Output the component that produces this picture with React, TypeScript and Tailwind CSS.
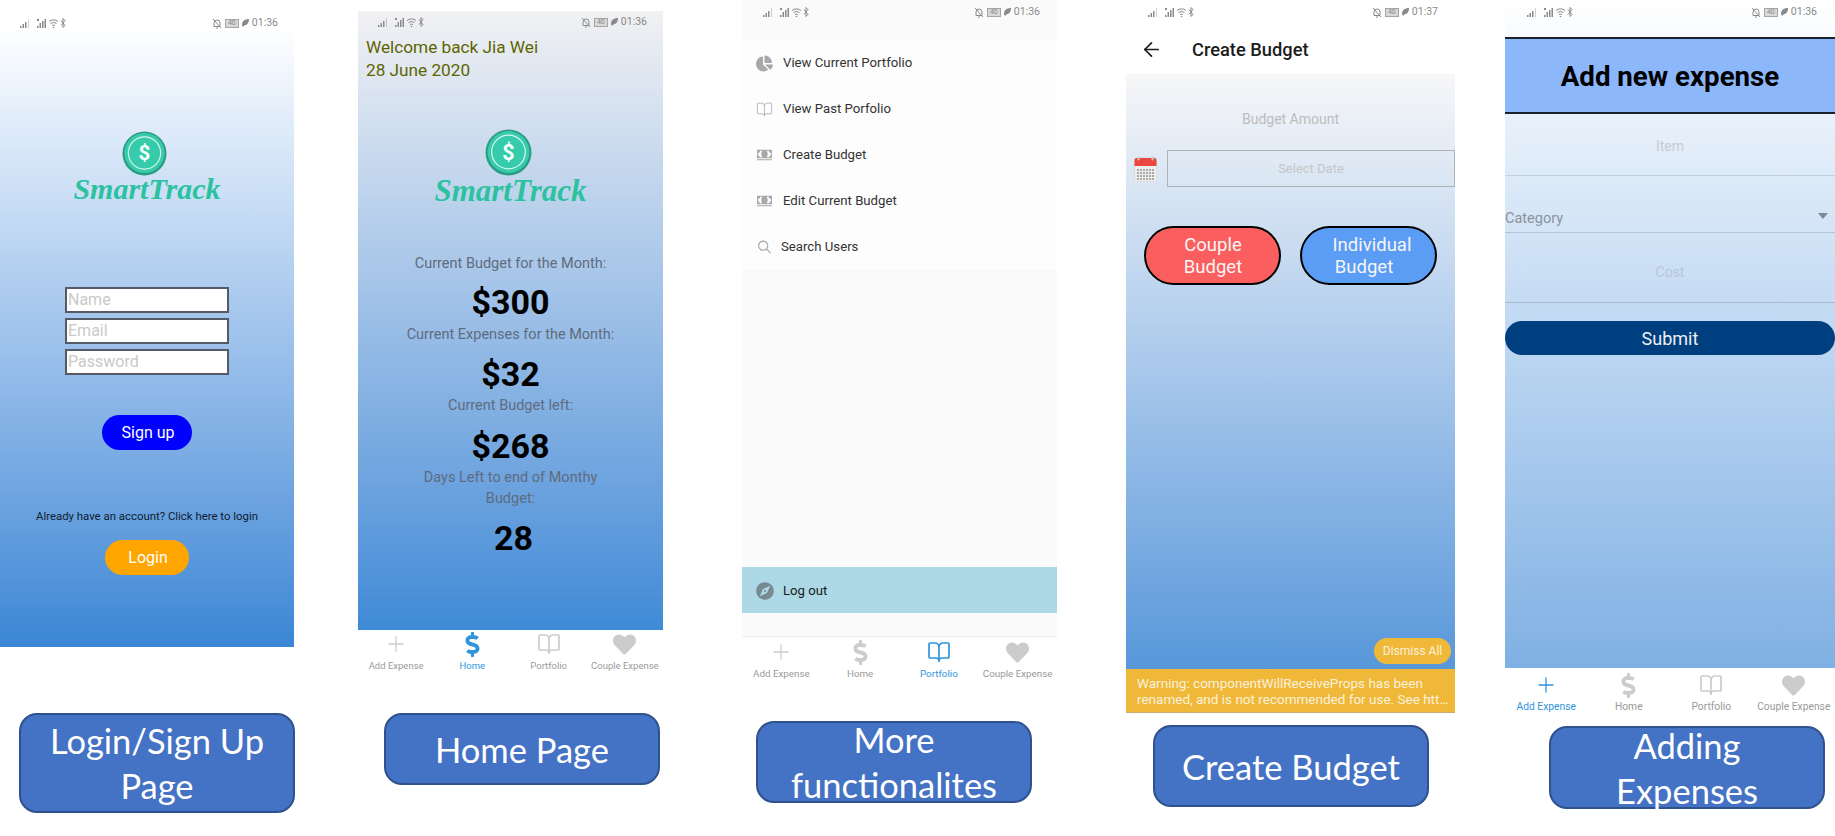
import { FaChartPie, FaDollarSign, FaHeart } from "react-icons/fa";
import { IoIosSearch, IoMdCash, IoMdCompass } from "react-icons/io";
import { LuArrowLeft, LuBookOpen, LuPlus } from "react-icons/lu";

const StatusIcons = ({ time, className }: { time: string; className: string }) => (
  <div className={`flex items-center justify-between h-[12px] text-[#8a8a8a] ${className}`}>
    <div className="flex items-center">
      <svg width="46" height="12" viewBox="0 0 46 12" fill="currentColor">
        <rect x="0" y="9" width="1.5" height="2" />
        <rect x="2.5" y="7" width="1.5" height="4" />
        <rect x="5" y="5" width="1.5" height="6" />
        <rect x="8" y="2" width="1" height="9" opacity="0.4" />
        <rect x="17" y="9" width="1.5" height="2" />
        <rect x="19.5" y="6" width="1.5" height="5" />
        <rect x="22" y="4" width="1.5" height="7" />
        <rect x="24.5" y="2" width="1.5" height="9" />
        <rect x="17" y="2" width="2" height="2" />
        <path d="M29 4.5a7 7 0 0 1 9 0M30.5 6.5a5 5 0 0 1 6 0M32 8.5a3 3 0 0 1 3 0" stroke="currentColor" fill="none" strokeWidth="1" />
        <circle cx="33.5" cy="10.5" r="0.8" />
        <path d="M41 3.5l4 5-2 2v-9l2 2-4 5" stroke="currentColor" fill="none" strokeWidth="1" />
      </svg>
    </div>
    <div className="flex items-center gap-[3px]">
      <svg width="10" height="11" viewBox="0 0 10 11" fill="none" stroke="currentColor" strokeWidth="1">
        <path d="M2 8.5V5a3 3 0 0 1 6 0v3.5zM4 10h2M1 1l8 9" />
      </svg>
      <div className="flex items-center justify-center w-[14px] h-[9px] border border-[#a5a5a5] bg-[#d8d8d8] text-[7px] leading-none font-['Roboto',sans-serif]">40</div>
      <svg width="7" height="8" viewBox="0 0 7 8" fill="currentColor">
        <path d="M7 0C3 0 0 2 0 6l1 2 2-2C5 6 7 4 7 0z" />
      </svg>
      <span className="text-[10.5px] leading-none">{time}</span>
    </div>
  </div>
);

const Logo = ({ text, coin }: { text: string; coin: number }) => (
  <div className="flex flex-col items-center">
    <svg width={coin} height={coin} viewBox="0 0 46 46" className="mr-[4px]">
      <circle cx="23" cy="23" r="22.5" fill="#2c9b83" />
      <circle cx="23" cy="22.5" r="20.5" fill="#36cbaa" />
      <circle cx="23" cy="22.5" r="16.5" fill="none" stroke="#d8f5ee" strokeWidth="1.2" />
      <text x="23" y="30" textAnchor="middle" fontSize="21" fontWeight="700" fill="#f2fffb" fontFamily="Roboto, sans-serif">$</text>
    </svg>
    <span className={`font-['Liberation_Serif',serif] font-bold italic leading-[30px] text-[#2cc2a0] ${text}`}>SmartTrack</span>
  </div>
);

const tabs = [
  { label: "Add Expense", icon: <LuPlus size={24} strokeWidth={1.3} /> },
  { label: "Home", icon: <FaDollarSign size={25} /> },
  { label: "Portfolio", icon: <LuBookOpen size={24} strokeWidth={1.7} /> },
  { label: "Couple Expense", icon: <FaHeart size={23} /> },
];

const TabBar = ({ active, textSize, className }: { active: string; textSize: string; className: string }) => (
  <div className={`grid grid-cols-4 bg-white ${className}`}>
    {tabs.map((t) => (
      <div key={t.label} className="flex flex-col items-center">
        <div className={`flex items-center justify-center h-[26px] ${t.label === active ? "text-[#2f95dc]" : "text-[#cccccc]"}`}>{t.icon}</div>
        <span className={`mt-[2px] leading-[14px] whitespace-nowrap ${textSize} ${t.label === active ? "text-[#2f95dc]" : "text-[#9a9a9a]"}`}>{t.label}</span>
      </div>
    ))}
  </div>
);

const Caption = ({ className, children }: { className: string; children: React.ReactNode }) => (
  <div className={`flex items-center justify-center w-[276px] shrink-0 rounded-[18px] border-2 border-[#2f528f] bg-[#4472c4] text-center font-['Lato',sans-serif] text-[34.5px] leading-[45px] text-white ${className}`}>
    <span>{children}</span>
  </div>
);

const LoginField = ({ placeholder }: { placeholder: string }) => (
  <div className="flex items-center w-[164px] h-[26px] border-2 border-[#555b66] bg-white pl-[1px] text-[16px] text-[#c9c9c9]">{placeholder}</div>
);

const StatLabel = ({ children }: { children: React.ReactNode }) => (
  <p className="w-[240px] text-center text-[14.5px] leading-[21px] text-[#5f6b7e]">{children}</p>
);

const StatValue = ({ children, className }: { children: string; className: string }) => (
  <p className={`text-center text-[34px] font-bold leading-[40px] text-black ${className}`}>{children}</p>
);

const menuItems = [
  { label: "View Current Portfolio", icon: <FaChartPie size={17} />, gap: "gap-[10px]" },
  { label: "View Past Porfolio", icon: <LuBookOpen size={17} strokeWidth={1.1} />, gap: "gap-[10px]" },
  { label: "Create Budget", icon: <IoMdCash size={18} />, gap: "gap-[10px]" },
  { label: "Edit Current Budget", icon: <IoMdCash size={18} />, gap: "gap-[10px]" },
  { label: "Search Users", icon: <IoIosSearch size={18} />, gap: "gap-[8px]" },
];

const BudgetButton = ({ bg, children }: { bg: string; children: React.ReactNode }) => (
  <div className={`flex items-center justify-center w-[137px] h-[59px] rounded-full border-2 border-black text-center text-[18.5px] leading-[22px] text-[#f5f5f5] ${bg}`}>{children}</div>
);

export default function App() {
  return (
    <div className="flex w-[1835px] h-[836px] overflow-hidden bg-white font-['Roboto',sans-serif]">
      {/* Login / sign up */}
      <div className="flex flex-col w-[294px] shrink-0">
        <section className="flex flex-col items-center h-[647px] bg-gradient-to-b from-white from-[4%] to-[#3a86d4]">
          <StatusIcons time="01:36" className="w-full mt-[17px] pl-[20px] pr-[16px]" />
          <div className="mt-[102px]">
            <Logo text="-mt-[2px] text-[30px]" coin={45} />
          </div>
          <div className="flex flex-col gap-[5px] mt-[83px]">
            <LoginField placeholder="Name" />
            <LoginField placeholder="Email" />
            <LoginField placeholder="Password" />
          </div>
          <div className="flex items-center justify-center w-[90px] h-[35px] mt-[40px] rounded-full bg-[#0000ff] pl-[2px] text-[16px] text-white">Sign up</div>
          <p className="mt-[58px] text-[11.4px] leading-[16px] text-[#10202f]">Already have an account? Click here to login</p>
          <div className="flex items-center justify-center w-[84px] h-[35px] mt-[16px] rounded-full bg-[#ffa500] pl-[2px] text-[16px] text-white">Login</div>
        </section>
        <Caption className="h-[100px] ml-[19px] mt-[66px]">Login/Sign Up Page</Caption>
      </div>

      {/* Home */}
      <div className="flex flex-col w-[305px] shrink-0 ml-[64px] pt-[11px]">
        <section className="flex flex-col h-[619px] bg-gradient-to-b from-[#f1f1f3] to-[#3f8ad6]">
          <StatusIcons time="01:36" className="mt-[5px] pl-[20px] pr-[16px]" />
          <div className="mt-[8px] pl-[8px] text-[17.2px] leading-[23.4px] text-[#5e6400]">
            <p>Welcome back Jia Wei</p>
            <p>28 June 2020</p>
          </div>
          <div className="flex flex-col items-center mt-[46px]">
            <Logo text="text-[31px]" coin={47} />
          </div>
          <div className="flex flex-col items-center mt-[47px]">
            <StatLabel>Current Budget for the Month:</StatLabel>
            <StatValue className="mt-[8px] mb-[2px]">$300</StatValue>
            <StatLabel>Current Expenses for the Month:</StatLabel>
            <StatValue className="mt-[9px] mb-[1px]">$32</StatValue>
            <StatLabel>Current Budget left:</StatLabel>
            <StatValue className="mt-[10px] mb-[1px]">$268</StatValue>
            <StatLabel>Days Left to end of Monthy<br />Budget:</StatLabel>
            <StatValue className="mt-[9px] pl-[6px]">28</StatValue>
          </div>
        </section>
        <TabBar active="Home" textSize="text-[9.5px]" className="h-[63px] pt-[1px]" />
        <Caption className="h-[72px] ml-[26px] mt-[20px]">Home Page</Caption>
      </div>

      {/* More functionalities */}
      <div className="flex flex-col w-[315px] shrink-0 ml-[79px]">
        <section className="flex flex-col h-[636px] bg-[#fafafa]">
          <StatusIcons time="01:36" className="mt-[6px] pl-[21px] pr-[17px]" />
          <div className="flex flex-col h-[231px] mt-[22px] bg-[#fdfdfd] border-b border-[#f8f8f8]">
            {menuItems.map((item) => (
              <div key={item.label} className={`flex items-center h-[46px] pl-[14px] text-[13.2px] text-[#333333] ${item.gap}`}>
                <span className="flex justify-center w-[17px] text-[#a8a8a8]">{item.icon}</span>
                <span>{item.label}</span>
              </div>
            ))}
          </div>
          <div className="flex items-center gap-[8px] h-[46px] mt-[296px] pl-[13px] pt-[1px] bg-[#add8e6] text-[13.2px] text-[#1a1a1a]">
            <IoMdCompass size={20} className="text-[#778a92]" />
            <span>Log out</span>
          </div>
        </section>
        <TabBar active="Portfolio" textSize="text-[9.8px]" className="h-[85px] pt-[2px] border-t border-[#eeeeee]" />
        <Caption className="h-[82px] ml-[14px]">More functionalites</Caption>
      </div>

      {/* Create budget */}
      <div className="flex flex-col w-[329px] shrink-0 ml-[69px]">
        <section className="flex flex-col h-[713px]">
          <div className="shrink-0 h-[74px] bg-white">
            <StatusIcons time="01:37" className="mt-[6px] pl-[22px] pr-[17px]" />
            <div className="flex items-center gap-[29px] mt-[18px] pl-[14px] text-[18.3px] font-medium text-[#1c1c1c]">
              <LuArrowLeft size={23} strokeWidth={1.8} />
              <span>Create Budget</span>
            </div>
          </div>
          <div className="relative flex-1 flex flex-col bg-gradient-to-b from-[#f7f7f8] to-[#5797da]">
            <p className="mt-[35px] text-center text-[14px] leading-[20px] text-[#bcbcbc]">Budget Amount</p>
            <div className="flex items-center gap-[10px] mt-[21px] pl-[8px]">
              <svg width="23" height="26" viewBox="0 0 23 26">
                <rect x="0.5" y="2" width="22" height="23.5" rx="2" fill="#eeeeee" stroke="#dddddd" />
                <path d="M0.5 10V4a2 2 0 0 1 2-2h18a2 2 0 0 1 2 2v6z" fill="#e8483f" />
                <rect x="3.5" y="0.5" width="2" height="4" rx="1" fill="#c9c9c9" />
                <rect x="17.5" y="0.5" width="2" height="4" rx="1" fill="#c9c9c9" />
                <g fill="#a9a9a9">
                  {[3, 6, 9, 12, 15, 18].map((x) =>
                    [13, 16, 19, 22].map((y) => <rect key={`${x}-${y}`} x={x} y={y} width="2" height="2" />)
                  )}
                </g>
              </svg>
              <div className="flex items-center justify-center w-[288px] h-[37px] border-[1.5px] border-[#aeb3b8] text-[13px] text-[#c4c6c8]">Select Date</div>
            </div>
            <div className="flex gap-[19px] mt-[39px] pl-[18px]">
              <BudgetButton bg="bg-[#fb5e5e] pl-[1px]">Couple<br />Budget</BudgetButton>
              <BudgetButton bg="bg-[#5b9cf5] pl-[7px]"><span>Individual<br /><span className="pr-[16px]">Budget</span></span></BudgetButton>
            </div>
            {/* dismiss pill sits over the page, above the warning */}
            <div className="absolute right-[4px] bottom-[5px] flex items-center justify-center w-[77px] h-[26px] rounded-full bg-[#f0b838] text-[12px] text-[#fbf1dc]">Dismiss All</div>
          </div>
          <div className="shrink-0 h-[44px] bg-[#f0b838] border-b border-[#c9ad6e] pl-[11px] pt-[6px] text-[13.5px] leading-[16px] text-[#fbf1dc] whitespace-nowrap">
            <p>Warning: componentWillReceiveProps has been</p>
            <p>renamed, and is not recommended for use. See htt…</p>
          </div>
        </section>
        <Caption className="h-[82px] ml-[27px] mt-[12px]">Create Budget</Caption>
      </div>

      {/* Add expense */}
      <div className="flex flex-col w-[330px] shrink-0 ml-[50px]">
        <section className="flex flex-col h-[668px] bg-gradient-to-b from-white to-[#7fb0e3] text-[14px]">
          <StatusIcons time="01:36" className="mt-[6px] pl-[22px] pr-[18px]" />
          <div className="flex items-center justify-center h-[77px] mt-[19px] pt-[2px] border-y-2 border-[#1a2230] bg-[#8cb7fb] text-[27.7px] font-bold text-black">Add new expense</div>
          <div className="flex items-center justify-center h-[62px] pt-[4px] border-b border-[#c3d0dd] text-[#c5ccd4]">Item</div>
          <div className="flex items-end justify-between h-[57px] pb-[2px] border-b border-[#b5c4d2] text-[14.5px] text-[#8b929c]">
            <span>Category</span>
            <svg width="10" height="6" viewBox="0 0 10 6" className="mr-[7px] mb-[11px]" fill="#7f8791">
              <path d="M0 0h10L5 6z" />
            </svg>
          </div>
          <div className="flex items-center justify-center h-[70px] pt-[10px] border-b border-[#a9b9c8] text-[#b8c7d6]">Cost</div>
          <div className="flex items-center justify-center h-[34px] mt-[18px] rounded-full bg-[#003f7f] text-[18px] text-[#f0f0f0]">Submit</div>
        </section>
        <TabBar active="Add Expense" textSize="text-[10.3px]" className="h-[58px] pt-[4px]" />
        <Caption className="h-[83px] ml-[44px]">Adding<br />Expenses</Caption>
      </div>
    </div>
  );
}
